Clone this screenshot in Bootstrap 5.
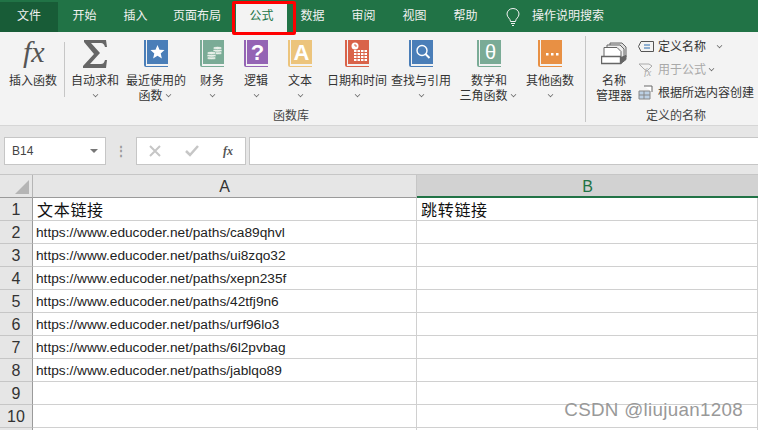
<!DOCTYPE html>
<html lang="zh">
<head>
<meta charset="UTF-8">
<title>Excel 公式</title>
<link href="https://cdn.jsdelivr.net/npm/bootstrap@5.3.2/dist/css/bootstrap.min.css" rel="stylesheet">
<style>
body { width: 758px; height: 430px; overflow: hidden; background: #fff; font-family: "Liberation Sans", "Noto Sans CJK SC", sans-serif; color: #333; font-size: 12px; position: relative; }

/* tabs */
.tabbar { height: 32px; background: #217346; color: #f1f1f1; padding-top: 2px; }
.tab-item { height: 30px; line-height: 29px; text-align: center; font-size: 12px; }
.tab-file { width: 58px; background: #185c37; margin-right: 1px; }
.w-51 { width: 51px; }
.w-72 { width: 72px; margin-right: 3px; }
.w-44 { width: 44px; }
.tab-active { background: #f3f3f3; color: #217346; }
.tab-search { margin-left: -3px; }
.redbox { position: absolute; left: 232px; top: 1px; width: 64px; height: 34px; border: 3px solid #f00; border-radius: 2px; }

/* ribbon */
.ribbon { height: 94px; background: #f3f3f3; border-bottom: 1px solid #d6d6d6; }
.rb-group { position: relative; }
.rb-main { width: 582px; }
.rb-label { position: absolute; left: 0; right: 0; top: 75px; text-align: center; font-size: 12px; line-height: 18px; color: #444; }
.rb-label-names { left: 4px; }
.rb-btn { text-align: center; font-size: 12px; line-height: 15px; padding-top: 8px; color: #333; }
.rb-icon { height: 30px; margin-bottom: 4px; display: flex; justify-content: center; align-items: flex-start; }
.caret-mini { display: inline-block; width: 5px; height: 5px; border-right: 1px solid #666; border-bottom: 1px solid #666; transform: rotate(45deg) scale(.8); margin: 0 3px 3px 3px; }
.caret-far { margin-left: 11px; }
.rb-sep-a { width: 1px; height: 55px; background: #c6c6c6; margin-top: 10px; }
.rb-sep-b { width: 1px; height: 86px; background: #c6c6c6; margin: 4px 0 0 3px; }
.w-fx { width: 58px; margin-left: 4px; margin-right: 2px; }
.w-sum { width: 58px; margin-left: 1px; }
.w-recent { width: 64px; }
.w-48 { width: 48px; }
.w-40 { width: 40px; }
.w-66 { width: 66px; }
.w-62 { width: 62px; }
.w-74 { width: 74px; }
.small-list { padding-top: 3px; white-space: nowrap; }
.small-row { height: 23px; }
.small-off { color: #a9a9a9; }
.ico-names { margin-top: 2px; }

/* formula strip */
.strip { height: 49px; background: #e6e6e6; border-bottom: 1px solid #c6c6c6; padding: 11px 0 0 4px; }
.namebox { width: 102px; height: 28px; background: #fff; border: 1px solid #c6c6c6; padding: 0 7px; font-size: 12px; color: #444; }
.namebox-arrow { width: 0; height: 0; border-left: 4px solid transparent; border-right: 4px solid transparent; border-top: 4px solid #777; }
.dots { width: 30px; color: #999; text-align: center; line-height: 28px; }
.fbtns { width: 110px; height: 28px; background: #fff; border: 1px solid #c6c6c6; }
.fx-mini { font-family: "Liberation Serif", serif; font-style: italic; font-weight: 700; color: #555; }
.fbox { height: 28px; background: #fff; border: 1px solid #c6c6c6; border-right: 0; margin-left: 3px; }

/* sheet */
.sheet { display: grid; grid-template-columns: 33px 384px 1fr; grid-auto-rows: 23px; }
.corner { background: #e6e6e6; border-right: 1px solid #b5b5b5; border-bottom: 1px solid #9a9a9a; position: relative; }
.corner svg { position: absolute; right: 3px; bottom: 3px; }
.col-h { background: #e6e6e6; border-right: 1px solid #c6c6c6; border-bottom: 1px solid #9a9a9a; text-align: center; font-size: 16px; line-height: 23px; color: #333; }
.col-sel { background: #d2d2d2; border-bottom: 2px solid #217346; color: #217346; border-right: 0; }
.row-h { background: #e6e6e6; border-right: 1px solid #9a9a9a; border-bottom: 1px solid #c6c6c6; text-align: center; font-size: 16px; line-height: 24px; color: #333; }
.cell-x { background: #fff; border-right: 1px solid #d0d0d0; border-bottom: 1px solid #d0d0d0; padding-left: 3px; font-size: 13.7px; line-height: 24px; color: #222; white-space: nowrap; overflow: hidden; }
.cell-t { font-size: 16px; letter-spacing: .7px; padding-left: 4px; line-height: 25px; color: #111; }

.mark-w { position: absolute; right: 15px; top: 398px; font-size: 18.8px; line-height: 24px; color: #999; letter-spacing: .3px; }
</style>
</head>
<body>
<svg width="0" height="0" class="position-absolute">
  <symbol id="bk" viewBox="0 0 24 28">
    <path d="M0 0h2v26h22v1H2a2 2 0 0 1-2-2z" fill="currentColor"/>
    <rect x="3" width="21" height="24" fill="currentColor"/>
  </symbol>
</svg>

<!-- tabs -->
<div class="tabbar d-flex">
  <div class="tab-item tab-file">文件</div>
  <div class="tab-item w-51">开始</div>
  <div class="tab-item w-51">插入</div>
  <div class="tab-item w-72">页面布局</div>
  <div class="tab-item w-51 tab-active">公式</div>
  <div class="tab-item w-51">数据</div>
  <div class="tab-item w-51">审阅</div>
  <div class="tab-item w-51">视图</div>
  <div class="tab-item w-51">帮助</div>
  <div class="tab-item w-44 d-flex align-items-center justify-content-center">
    <svg width="14" height="19" viewBox="0 0 14 19" fill="none" stroke="#f1f1f1" stroke-width="1"><path d="M4.500 13.500C4.500 10.500 1 9.500 1 6a6 5.500 0 0 1 12 0c0 3.500-3.500 4.500-3.500 7.500z"/><path d="M5 15.500h4M6 17.500h2"/></svg>
  </div>
  <div class="tab-item tab-search">操作说明搜索</div>
</div>
<div class="redbox"></div>

<!-- ribbon -->
<div class="ribbon d-flex">
  <div class="rb-group rb-main d-flex">
    <div class="rb-btn w-fx">
      <div class="rb-icon"><svg width="38" height="30" viewBox="0 0 38 30"><text x="9" y="22" font-family="Liberation Serif" font-style="italic" font-size="30" fill="#555">fx</text></svg></div>
      插入函数
    </div>
    <div class="rb-sep-a"></div>
    <div class="rb-btn w-sum">
      <div class="rb-icon"><svg width="24" height="28" viewBox="0 0 24 28"><path d="M1 0h22l1 7h-2c-1-3-2-4-4-4H8l9 10-10 11h11c2 0 3-1 4-4h2l-1 8H0v-2l11-12L1 2z" fill="#666"/></svg></div>
      自动求和<br><span class="caret-mini"></span>
    </div>
    <div class="rb-btn w-recent">
      <div class="rb-icon"><svg width="24" height="28" color="#4a7eb8"><use href="#bk"/><path d="M13.500 5l2 4.700 5 .4-3.800 3.300 1.200 5-4.400-2.700-4.400 2.700 1.200-5-3.800-3.300 5-.4z" fill="#fff"/></svg></div>
      最近使用的<br>函数<span class="caret-mini"></span>
    </div>
    <div class="rb-btn w-48">
      <div class="rb-icon"><svg width="24" height="28" color="#7aab96"><use href="#bk"/><g fill="#e8efe9" stroke="#7aab96" stroke-width=".6"><ellipse cx="17.500" cy="13" rx="4.500" ry="1.600"/><ellipse cx="17.500" cy="10.500" rx="4.500" ry="1.600"/><ellipse cx="17.500" cy="8" rx="4.500" ry="1.600"/><ellipse cx="11.500" cy="18" rx="4.500" ry="1.600"/><ellipse cx="11.500" cy="15.500" rx="4.500" ry="1.600"/><ellipse cx="11.500" cy="13" rx="4.500" ry="1.600"/></g></svg></div>
      财务<br><span class="caret-mini"></span>
    </div>
    <div class="rb-btn w-40">
      <div class="rb-icon"><svg width="24" height="28" color="#9464b4"><use href="#bk"/><text x="13.500" y="20" text-anchor="middle" font-family="Liberation Sans" font-weight="700" font-size="22" fill="#fff">?</text></svg></div>
      逻辑<br><span class="caret-mini"></span>
    </div>
    <div class="rb-btn w-48">
      <div class="rb-icon"><svg width="24" height="28" color="#ecc47c"><use href="#bk"/><text x="13.500" y="20" text-anchor="middle" font-family="Liberation Sans" font-weight="700" font-size="22" fill="#fff">A</text></svg></div>
      文本<br><span class="caret-mini"></span>
    </div>
    <div class="rb-btn w-66">
      <div class="rb-icon"><svg width="24" height="28" color="#d9634a"><use href="#bk"/><circle cx="10" cy="6" r="3.500" fill="#fff"/><path d="M10 4v2h2" fill="none" stroke="#d9634a"/><path d="M9 10h13v11H9z" fill="#fff"/><path d="M9 12.500h13M9 15.500h13M9 18.500h13M12 10v11M15.500 10v11M19 10v11" stroke="#d9634a"/></svg></div>
      日期和时间<br><span class="caret-mini"></span>
    </div>
    <div class="rb-btn w-62">
      <div class="rb-icon"><svg width="24" height="28" color="#4a7eb8"><use href="#bk"/><circle cx="13" cy="10.500" r="5" fill="none" stroke="#fff" stroke-width="1.400"/><path d="M16.500 14l4 4" stroke="#fff" stroke-width="2"/></svg></div>
      查找与引用<br><span class="caret-mini"></span>
    </div>
    <div class="rb-btn w-74">
      <div class="rb-icon"><svg width="24" height="28" color="#7aab96"><use href="#bk"/><text x="13.500" y="19" text-anchor="middle" font-family="Liberation Sans" font-size="20" fill="#fff">θ</text></svg></div>
      数学和<br>三角函数<span class="caret-mini"></span>
    </div>
    <div class="rb-btn w-48">
      <div class="rb-icon"><svg width="24" height="28" color="#e89044"><use href="#bk"/><g fill="#fff"><rect x="8" y="13" width="2.500" height="2.500"/><rect x="13" y="13" width="2.500" height="2.500"/><rect x="18" y="13" width="2.500" height="2.500"/></g></svg></div>
      其他函数<br><span class="caret-mini"></span>
    </div>
    <div class="rb-label">函数库</div>
  </div>
  <div class="rb-sep-b"></div>
  <div class="rb-group d-flex ms-1 flex-grow-1">
    <div class="rb-btn w-48">
      <div class="rb-icon"><svg class="ico-names" width="26" height="24" viewBox="0 0 26 24" fill="#fff" stroke="#666"><path d="M9 1h12l4 4v10H9z" fill="#ddd"/><path d="M6 3h13l4 4v9H6z" fill="#eee"/><path d="M3 5.500h13l4 4v7H3z"/><path d="M.5 14.500h19v7H.5z" stroke-width="1.400"/><path d="M20 21.500l5-4v-4l-5 2z" fill="#666"/></svg></div>
      名称<br>管理器
    </div>
    <div class="small-list">
      <div class="small-row d-flex align-items-center">
        <svg width="16" height="11" viewBox="0 0 16 11" class="me-1" fill="none" stroke="#555"><path d="M3 .5h12.500v10H3L.5 5.500z"/><path d="M6 4h6M6 7h6" stroke="#2b6cb0"/></svg>定义名称<span class="caret-mini caret-far"></span>
      </div>
      <div class="small-row d-flex align-items-center small-off">
        <svg width="16" height="15" viewBox="0 0 16 15" class="me-1" fill="none" stroke="#aaa"><path d="M1 2h10l3 2-5 5-3-2z"/><text x="6" y="14" font-family="Liberation Serif" font-style="italic" font-size="10" fill="#aaa" stroke="none">fx</text></svg>用于公式<span class="caret-mini"></span>
      </div>
      <div class="small-row d-flex align-items-center">
        <svg width="16" height="15" viewBox="0 0 16 15" class="me-1"><path d="M1 6h11v8H1z" fill="#bcd0e4" stroke="#888"/><path d="M1 10h11M6 6v8" stroke="#888"/><path d="M6 1h8v6" fill="#fff" stroke="#666"/></svg>根据所选内容创建
      </div>
    </div>
    <div class="rb-label rb-label-names">定义的名称</div>
  </div>
</div>

<!-- formula bar -->
<div class="strip d-flex">
  <div class="namebox d-flex align-items-center justify-content-between"><span>B14</span><span class="namebox-arrow"></span></div>
  <div class="dots fw-bold">⋮</div>
  <div class="fbtns d-flex align-items-center justify-content-around">
    <svg width="12" height="12" viewBox="0 0 12 12" stroke="#c6c6c6" stroke-width="2"><path d="M1 1l10 10M11 1L1 11"/></svg>
    <svg width="14" height="12" viewBox="0 0 14 12" fill="none" stroke="#c6c6c6" stroke-width="2.500"><path d="M1 6l4 4 8-9"/></svg>
    <span class="fx-mini">fx</span>
  </div>
  <div class="fbox flex-grow-1"></div>
</div>

<!-- sheet -->
<div class="sheet">
  <div class="corner"><svg width="14" height="14"><path d="M14 0v14H0z" fill="#b5b5b5"/></svg></div>
  <div class="col-h">A</div>
  <div class="col-h col-sel">B</div>
  <div class="row-h">1</div><div class="cell-x cell-t">文本链接</div><div class="cell-x cell-t">跳转链接</div>
  <div class="row-h">2</div><div class="cell-x">https://www.educoder.net/paths/ca89qhvl</div><div class="cell-x"></div>
  <div class="row-h">3</div><div class="cell-x">https://www.educoder.net/paths/ui8zqo32</div><div class="cell-x"></div>
  <div class="row-h">4</div><div class="cell-x">https://www.educoder.net/paths/xepn235f</div><div class="cell-x"></div>
  <div class="row-h">5</div><div class="cell-x">https://www.educoder.net/paths/42tfj9n6</div><div class="cell-x"></div>
  <div class="row-h">6</div><div class="cell-x">https://www.educoder.net/paths/urf96lo3</div><div class="cell-x"></div>
  <div class="row-h">7</div><div class="cell-x">https://www.educoder.net/paths/6l2pvbag</div><div class="cell-x"></div>
  <div class="row-h">8</div><div class="cell-x">https://www.educoder.net/paths/jablqo89</div><div class="cell-x"></div>
  <div class="row-h">9</div><div class="cell-x"></div><div class="cell-x"></div>
  <div class="row-h">10</div><div class="cell-x"></div><div class="cell-x"></div>
  <div class="row-h"></div><div class="cell-x"></div><div class="cell-x"></div>
</div>
<div class="mark-w">CSDN @liujuan1208</div>

<script src="https://cdn.jsdelivr.net/npm/bootstrap@5.3.2/dist/js/bootstrap.bundle.min.js"></script>
</body>
</html>
